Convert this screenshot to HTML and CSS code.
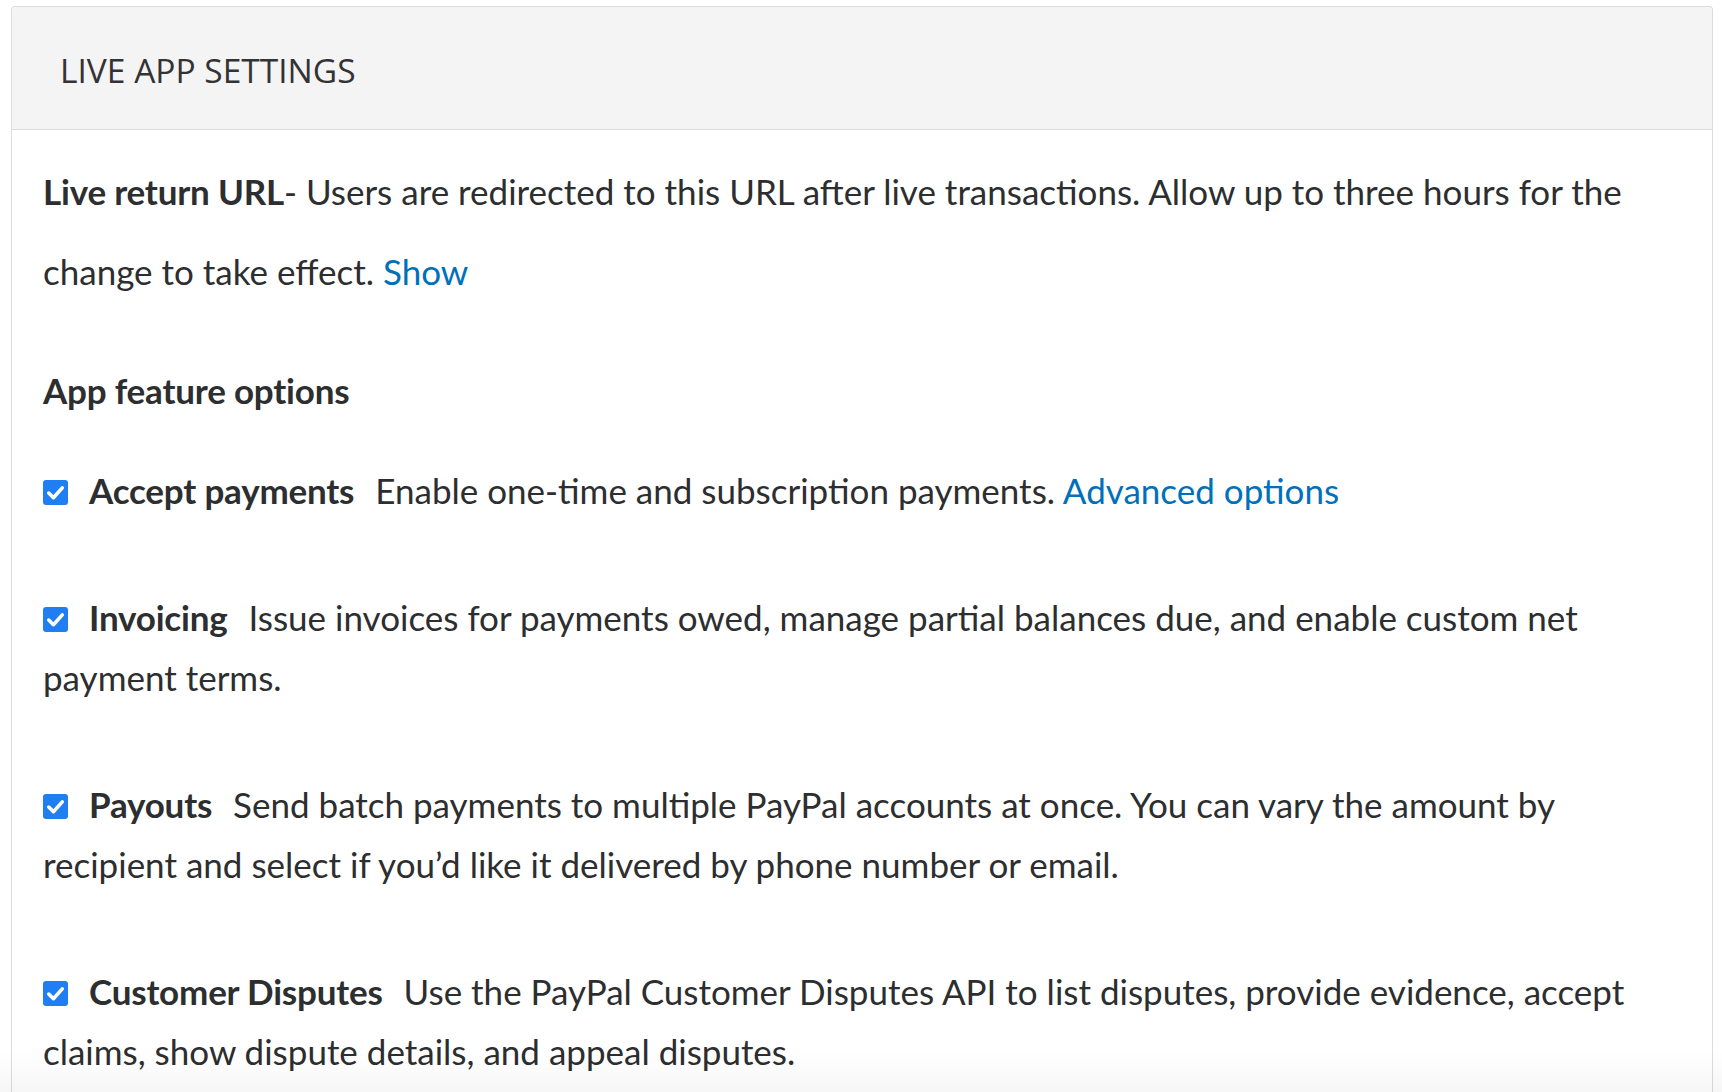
FILE: index.html
```html
<!DOCTYPE html>
<html>

<link rel="stylesheet" href="styles.css">

<head>
    <meta charset="utf-8">
    <title>Live app settings</title>
    <meta name="viewport" content="width=device-width, initial-scale=1">
</head>

<body>
    <main>
        <section class="Card">
            <header class="CardHeader">
                <h2>LIVE APP SETTINGS</h2>
            </header>
            <div class="CardBody">
                <p class="ReturnUrl">
                    <strong>Live return URL</strong>- Users are redirected to this URL after live transactions. Allow up to three hours for the change to take effect. <a href="#">Show</a>
                </p>

                <h3>App feature options</h3>

                <label class="Feature">
                    <span class="Check"><svg viewBox="0 0 24 24"><path d="M5.5 12.5 L10 17 L18.5 7.5" /></svg></span><strong>Accept payments</strong> Enable one-time and subscription payments. <a href="#">Advanced options</a>
                </label>

                <label class="Feature">
                    <span class="Check"><svg viewBox="0 0 24 24"><path d="M5.5 12.5 L10 17 L18.5 7.5" /></svg></span><strong>Invoicing</strong> Issue invoices for payments owed, manage partial balances due, and enable custom net payment terms.
                </label>

                <label class="Feature">
                    <span class="Check"><svg viewBox="0 0 24 24"><path d="M5.5 12.5 L10 17 L18.5 7.5" /></svg></span><strong>Payouts</strong> Send batch payments to multiple PayPal accounts at once. You can vary the amount by recipient and select if you’d like it delivered by phone number or email.
                </label>

                <label class="Feature">
                    <span class="Check"><svg viewBox="0 0 24 24"><path d="M5.5 12.5 L10 17 L18.5 7.5" /></svg></span><strong>Customer Disputes</strong> Use the PayPal Customer Disputes API to list disputes, provide evidence, accept claims, show dispute details, and appeal disputes.
                </label>
            </div>
        </section>
        <div class="Fade"></div>
    </main>
</body>

</html>
```

FILE: styles.css
```css
* {
    box-sizing: border-box;
    padding: 0;
    margin: 0;
}

body {
    background-color: #ffffff;
    font-family: Lato, "Noto Sans", sans-serif;
    color: #2c2e2f;
    overflow: hidden;

    & main {
        width: 100%;
        height: 100vh;
        padding: 6px 9px 0 11px;
    }
}

.Card {
    border: 1px solid #dcdcdc;
    border-bottom: none;
    border-radius: 4px 4px 0 0;
    min-height: 1200px;

    & .CardHeader {
        background-color: #f4f4f4;
        border-bottom: 1px solid #dcdcdc;
        border-radius: 4px 4px 0 0;
        padding: 43px 48px 39px;

        & h2 {
            font-family: "Open Sans", sans-serif;
            font-weight: 400;
            font-size: 33.5px;
            line-height: 40px;
            color: #333333;
        }
    }

    & .CardBody {
        padding: 21px 30px 0 31px;
        font-size: 35px;

        & strong {
            letter-spacing: -0.2px;
        }
    }
}

.ReturnUrl {
    line-height: 80px;
}

a {
    color: #0070ba;
    text-decoration: none;
}

h3 {
    font-size: 35px;
    font-weight: 700;
    letter-spacing: -0.2px;
    line-height: 60px;
    margin: 49px 0 40px;
}

.Feature {
    display: block;
    line-height: 60px;
    margin-bottom: 67px;

    & strong {
        margin-right: 12px;
    }
}

.Check {
    display: inline-block;
    width: 25px;
    height: 25px;
    margin-right: 21px;
    border-radius: 3px;
    background-color: #1f7ef1;
    vertical-align: -1px;

    & svg {
        display: block;
        width: 25px;
        height: 25px;
        fill: none;
        stroke: #ffffff;
        stroke-width: 3.4;
        stroke-linecap: round;
        stroke-linejoin: round;
    }
}

.Fade {
    position: fixed;
    left: 0;
    right: 0;
    bottom: 0;
    height: 40px;
    background: linear-gradient(to bottom, rgba(0, 0, 0, 0), rgba(0, 0, 0, 0.035));
    pointer-events: none;
}
```
